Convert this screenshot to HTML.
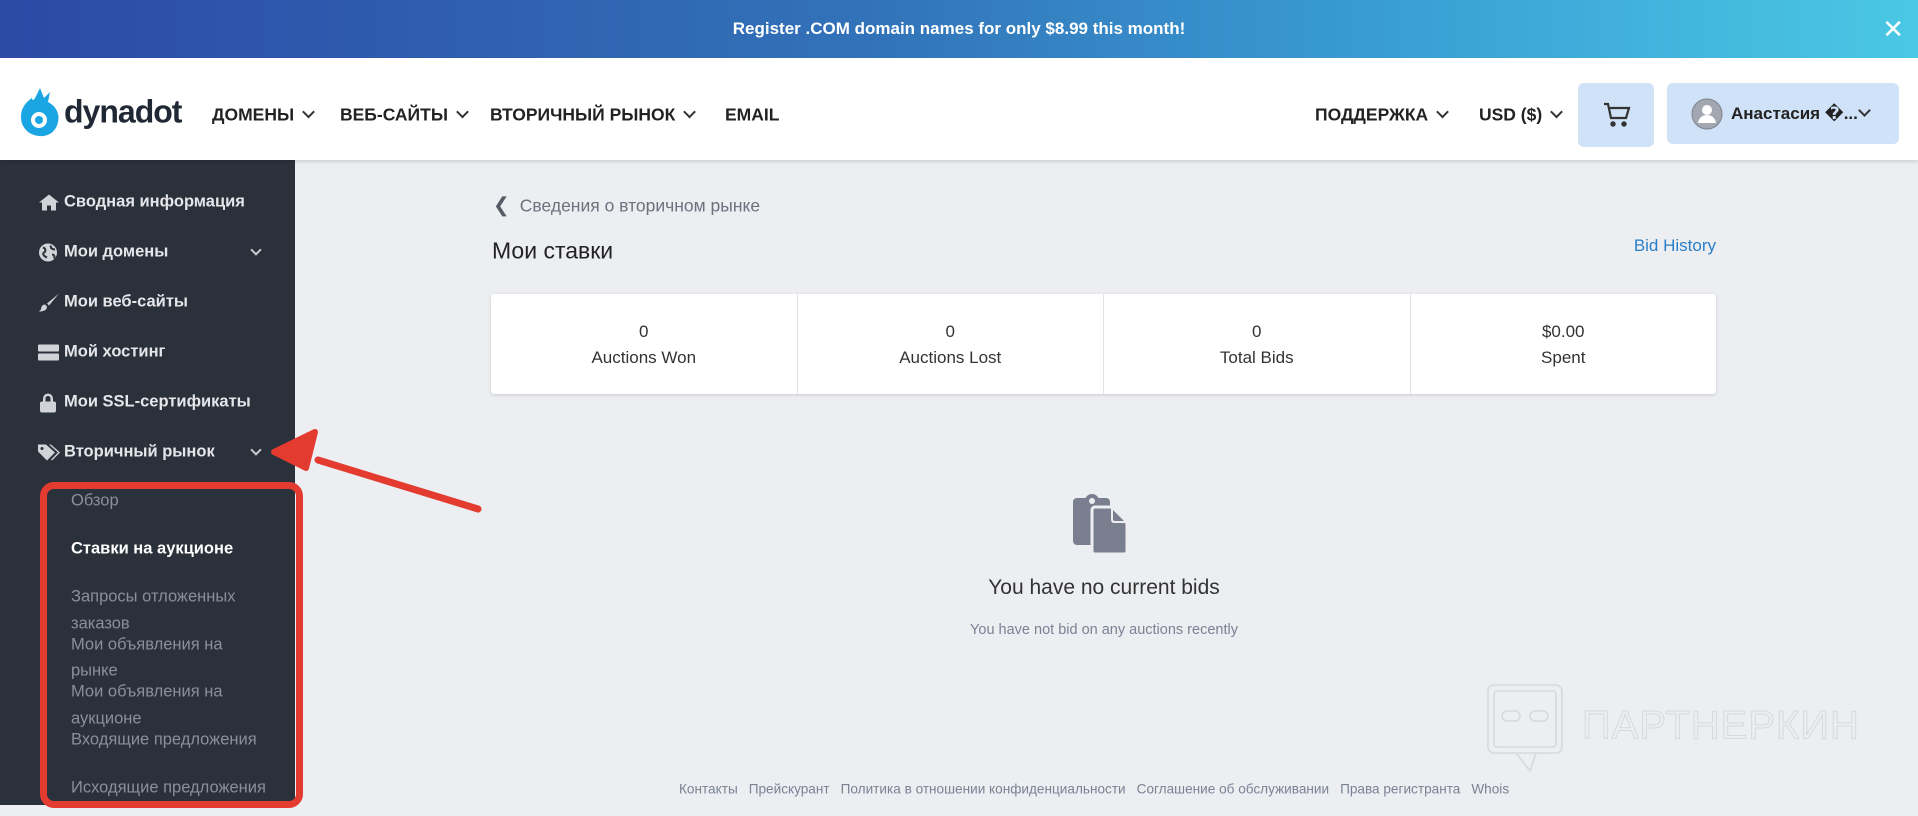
<!DOCTYPE html>
<html><head><meta charset="utf-8"><style>
*{margin:0;padding:0;box-sizing:border-box}
body{width:1918px;height:816px;overflow:hidden;font-family:"Liberation Sans","DejaVu Sans",sans-serif;background:#eceef1;position:relative}
.banner{position:absolute;left:0;top:0;width:1918px;height:58px;background:linear-gradient(90deg,#2c49a6 0%,#3272b8 45%,#3aa2d6 75%,#4ac8e4 100%);color:#fff;font-weight:bold;font-size:17px;text-align:center;line-height:58px}
.banner .x{position:absolute;right:14px;top:0;font-size:26px;font-weight:bold}
.header{position:absolute;left:0;top:58px;width:1918px;height:102px;background:#fff;box-shadow:0 2px 3px rgba(0,0,0,.12);z-index:2}
.nav{position:absolute;top:57px;transform:translateY(-50%);font-weight:bold;font-size:17.5px;color:#222;white-space:nowrap}
.chev{display:inline-block;width:9px;height:9px;border-right:2px solid #333;border-bottom:2px solid #333;transform:rotate(45deg);margin-left:10px;position:relative;top:-4px}
.btn{position:absolute;background:#cfe2f7;border-radius:6px}
.side{position:absolute;left:0;top:160px;width:295px;height:645px;background:#2b313b}
.si{position:absolute;left:38px;color:#e4e6ea;font-weight:bold;font-size:16.5px;transform:translateY(-50%);white-space:nowrap}
.si svg{position:absolute;left:0;top:50%;transform:translateY(-50%)}
.si span{margin-left:26px}
.sc{position:absolute;left:252px;width:8px;height:8px;border-right:2px solid #c8ccd2;border-bottom:2px solid #c8ccd2;transform:rotate(45deg)}
.sub{position:absolute;left:71px;color:#8a8f99;font-size:16.5px;transform:translateY(-50%);white-space:nowrap}
.card{position:absolute;left:491px;top:294px;width:1225px;height:100px;background:#fff;border-radius:3px;box-shadow:0 1px 3px rgba(0,0,0,.15);display:flex}
.card div{flex:1;border-right:1px solid #e2e4e8;text-align:center;font-size:17px;color:#333;padding-top:25px;line-height:26px}
.card div:last-child{border-right:none}
.foot{position:absolute;top:789px;left:679px;font-size:13.6px;color:#7a8294;transform:translateY(-50%);white-space:nowrap}
.foot span{margin-right:11px}
</style></head><body>
<div class="banner">Register .COM domain names for only $8.99 this month!<span class="x">✕</span></div>
<div class="header">
 <svg style="position:absolute;left:20px;top:28px" width="40" height="52" viewBox="0 0 40 52"><path d="M20 2 L24 12 L30 6 L28 16 C36 20 40 28 38 36 C36 46 28 51 19 50 C8 49 1 41 1 31 C1 22 6 16 12 12 C13 18 16 10 20 2Z" fill="#1ba5e3"/><circle cx="19" cy="34" r="8" fill="#fff"/><circle cx="19" cy="34" r="4" fill="#1ba5e3"/></svg>
 <div class="nav" style="left:64px;font-size:32px;font-weight:bold;color:#1f2834;letter-spacing:-1px;top:54px">dynadot</div>
 <div class="nav" style="left:212px">ДОМЕНЫ<i class="chev"></i></div>
 <div class="nav" style="left:340px">ВЕБ-САЙТЫ<i class="chev"></i></div>
 <div class="nav" style="left:490px">ВТОРИЧНЫЙ РЫНОК<i class="chev"></i></div>
 <div class="nav" style="left:725px">EMAIL</div>
 <div class="nav" style="left:1315px">ПОДДЕРЖКА<i class="chev"></i></div>
 <div class="nav" style="left:1479px">USD ($)<i class="chev"></i></div>
 <div class="btn" style="left:1578px;top:25px;width:76px;height:64px">
  <svg style="position:absolute;left:25px;top:18px" width="28" height="28" viewBox="0 0 28 28" fill="none" stroke="#333" stroke-width="2.2"><path d="M1 3h4l3 14h15l3-10H7"/><circle cx="10" cy="23" r="1.6" fill="#333"/><circle cx="21" cy="23" r="1.6" fill="#333"/></svg>
 </div>
 <div class="btn" style="left:1667px;top:25px;width:232px;height:61px">
  <svg style="position:absolute;left:24px;top:15px" width="32" height="32" viewBox="0 0 32 32"><circle cx="16" cy="16" r="15" fill="#a3a7b1" stroke="#7d828c"/><circle cx="16" cy="12" r="5" fill="#fff"/><path d="M7 25c1-6 5-8 9-8s8 2 9 8z" fill="#fff"/></svg>
  <div style="position:absolute;left:64px;top:50%;transform:translateY(-50%);font-weight:bold;font-size:17px;color:#222;white-space:nowrap">Анастасия �...<i class="chev" style="margin-left:2px"></i></div>
 </div>
</div>
<div class="side">
 <div class="si" style="top:42px"><svg width="22" height="18" viewBox="0 0 22 18" fill="#d0d3d8"><path d="M11 1L1 9h3v8h5v-5h4v5h5V9h3z"/></svg><span>Сводная информация</span></div>
 <div class="si" style="top:92px"><svg width="20" height="20" viewBox="0 0 20 20"><circle cx="10" cy="10" r="9" fill="#d0d3d8"/><path d="M5 5c3 1 3 4 1 5s0 4 3 5M13 3c-1 3 2 4 4 4M14 12c2 0 3 2 2 4" stroke="#2b313b" stroke-width="2" fill="none"/></svg><span>Мои домены</span></div>
 <i class="sc" style="top:86px"></i>
 <div class="si" style="top:142px"><svg width="22" height="20" viewBox="0 0 22 20" fill="#d0d3d8"><path d="M21 1L9 11l2 2L21 1zM7 12c-3 0-4 3-4 5l-2 2c4 0 8-1 8-5z"/></svg><span>Мои веб-сайты</span></div>
 <div class="si" style="top:192px"><svg width="21" height="18" viewBox="0 0 21 18" fill="#d0d3d8"><rect x="0" y="1" width="21" height="7" rx="1"/><rect x="0" y="10" width="21" height="7" rx="1"/></svg><span>Мой хостинг</span></div>
 <div class="si" style="top:242px"><svg width="20" height="20" viewBox="0 0 20 20" fill="#d0d3d8"><path d="M5 9V6a5 5 0 0110 0v3h-2.5V6a2.5 2.5 0 00-5 0v3z"/><rect x="2" y="9" width="16" height="11" rx="2"/></svg><span>Мои SSL-сертификаты</span></div>
 <div class="si" style="top:292px"><svg width="22" height="18" viewBox="0 0 22 18" fill="#d0d3d8"><path d="M0 1h8l9 8-8 8-9-9z"/><path d="M11 1h2l9 8-8 8-1-1 7-7z"/><circle cx="4" cy="5" r="1.5" fill="#2b313b"/></svg><span>Вторичный рынок</span></div>
 <i class="sc" style="top:286px"></i>
 <div class="sub" style="top:341px">Обзор</div>
 <div class="sub" style="top:389px;color:#fff;font-weight:bold">Ставки на аукционе</div>
 <div class="sub" style="top:437px">Запросы отложенных</div>
 <div class="sub" style="top:464px">заказов</div>
 <div class="sub" style="top:485px">Мои объявления на</div>
 <div class="sub" style="top:511px">рынке</div>
 <div class="sub" style="top:532px">Мои объявления на</div>
 <div class="sub" style="top:559px">аукционе</div>
 <div class="sub" style="top:580px">Входящие предложения</div>
 <div class="sub" style="top:628px">Исходящие предложения</div>
</div>
<div style="position:absolute;left:40px;top:482px;width:263px;height:326px;border:7px solid #e43b30;border-radius:14px;z-index:3"></div>
<svg style="position:absolute;left:0;top:0;z-index:4" width="1918" height="816"><path d="M478 509 L318 460" stroke="#e43b30" stroke-width="7" stroke-linecap="round"/><path d="M274 452 L315 432 L306 468 Z" fill="#e43b30" stroke="#e43b30" stroke-width="6" stroke-linejoin="round"/></svg>
<div style="position:absolute;left:493px;top:205px;transform:translateY(-50%);font-size:17.5px;color:#6c737f"><span style="font-weight:bold;color:#555c66;margin-right:10px;font-size:20px">&#10094;</span>Сведения о вторичном рынке</div>
<div style="position:absolute;left:492px;top:251px;transform:translateY(-50%);font-size:23px;color:#222">Мои ставки</div>
<div style="position:absolute;right:202px;top:246px;transform:translateY(-50%);font-size:17px;color:#2a7fc8">Bid History</div>
<div class="card"><div>0<br>Auctions Won</div><div>0<br>Auctions Lost</div><div>0<br>Total Bids</div><div>$0.00<br>Spent</div></div>
<svg style="position:absolute;left:1073px;top:493px" width="64" height="62" viewBox="0 0 64 62"><rect x="0" y="5" width="37" height="47" rx="4" fill="#7a7f8f"/><circle cx="19" cy="8" r="7" fill="#7a7f8f"/><circle cx="19" cy="8" r="3" fill="#eceef1"/><path d="M22 14h16l16 16v28a3 3 0 01-3 3H22a3 3 0 01-3-3V17a3 3 0 013-3z" fill="#7a7f8f" stroke="#eceef1" stroke-width="3"/><path d="M38 14v13a3 3 0 003 3h13" fill="#eceef1"/><path d="M40 17v9a2 2 0 002 2h9z" fill="#7a7f8f"/></svg>
<div style="position:absolute;left:0;width:2208px;top:588px;transform:translateY(-50%);text-align:center;font-size:21px;color:#333">You have no current bids</div>
<div style="position:absolute;left:0;width:2208px;top:630px;transform:translateY(-50%);text-align:center;font-size:14.5px;color:#7a8294">You have not bid on any auctions recently</div>
<svg style="position:absolute;left:1486px;top:683px" width="80" height="92" viewBox="0 0 80 92" fill="none" stroke="#d6d9dd" stroke-width="1.6"><rect x="2" y="2" width="74" height="68" rx="6"/><rect x="8" y="8" width="62" height="56" rx="3"/><path d="M30 70 L44 88 L50 70"/><rect x="16" y="28" width="18" height="10" rx="5"/><rect x="44" y="28" width="18" height="10" rx="5"/></svg>
<div style="position:absolute;left:1582px;top:726px;transform:translateY(-50%);font-size:40px;color:transparent;-webkit-text-stroke:1px #d6d9dd;letter-spacing:1px">ПАРТНЕРКИН</div>
<div class="foot"><span>Контакты</span><span>Прейскурант</span><span>Политика в отношении конфиденциальности</span><span>Соглашение об обслуживании</span><span>Права регистранта</span><span>Whois</span></div>
</body></html>
